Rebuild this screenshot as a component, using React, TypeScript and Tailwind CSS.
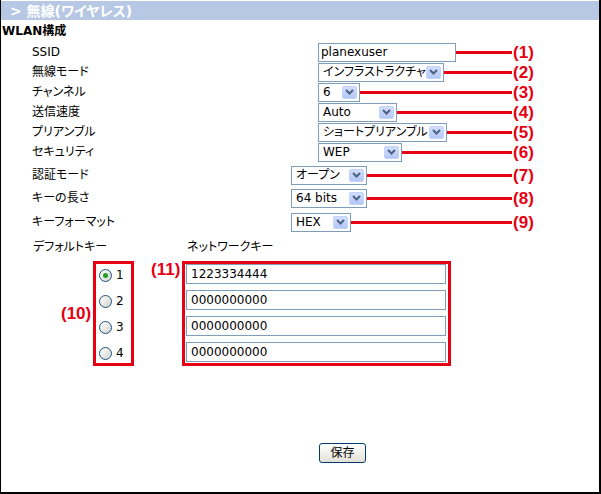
import React from 'react';

const RED = 'bg-[#e60012]';

const Arrow = () => (
  <div className="absolute right-[2px] top-[2px] bottom-[2px] w-[15px] rounded-[2px] border border-[#c3d3fd] bg-gradient-to-b from-[#d2defd] to-[#b4c8f6] flex items-center justify-center">
    <svg width="9" height="6" viewBox="0 0 9 6">
      <path d="M1 1 L4.5 4.5 L8 1" fill="none" stroke="#4d6185" strokeWidth="2" />
    </svg>
  </div>
);

const Select = ({ w, value }: { w: string; value: string }) => (
  <div className={`relative h-[19px] ${w} border border-[#7f9db9] bg-white flex items-center pl-[4px] text-[12px] whitespace-nowrap overflow-hidden`}>
    <span>{value}</span>
    <Arrow />
  </div>
);

const Mark = ({ n }: { n: string }) => (
  <div className="w-[87px] pl-[1px] text-[#e60012] font-['Liberation_Sans',sans-serif] font-bold text-[17px] leading-none">
    ({n})
  </div>
);

const Row = ({
  label,
  labelW,
  n,
  children,
  className = '',
}: {
  label: string;
  labelW: string;
  n: string;
  children: React.ReactNode;
  className?: string;
}) => (
  <div className={`flex items-center h-[20px] ${className}`}>
    <div className={`${labelW} pl-[31px] text-[12px] whitespace-nowrap`}>{label}</div>
    {children}
    <div className={`flex-1 h-[3px] ${RED}`} />
    <Mark n={n} />
  </div>
);

const Radio = ({ checked, label }: { checked?: boolean; label: string }) => (
  <div className="flex items-center h-[20px]">
    <div className="w-[13px] h-[13px] rounded-full border border-[#1c5180] bg-gradient-to-br from-white to-[#d4d4cc] flex items-center justify-center">
      {checked && <div className="w-[5px] h-[5px] rounded-full bg-[#21a121]" />}
    </div>
    <span className="ml-[4px] text-[12px]">{label}</span>
  </div>
);

const KeyInput = ({ value }: { value: string }) => (
  <div className="h-[20px] w-[260px] border border-[#7f9db9] bg-white flex items-center pl-[4px] text-[12px]">
    {value}
  </div>
);

export default function App() {
  return (
    <div className="w-[601px] h-[494px] bg-white border-l border-r-2 border-b-2 border-black pt-px text-black font-['DejaVu_Sans','Noto_Sans_CJK_JP',sans-serif] [font-feature-settings:'palt']">
      <div className="h-[19px] bg-[#b7c8e4] pl-[9px] flex items-center text-white font-bold text-[14px] leading-none">
        &gt; 無線(ワイヤレス)
      </div>
      <div className="h-[22px] flex items-center pl-[1px] font-bold text-[12px]">WLAN構成</div>

      <div className="flex items-center h-[20px]">
        <div className="w-[317px] pl-[31px] text-[12px]">SSID</div>
        <div className="h-[19px] w-[138px] border border-[#7f9db9] bg-white flex items-center pl-[2px] text-[12px]">
          planexuser
        </div>
        <div className={`flex-1 h-[3px] ${RED}`} />
        <Mark n="1" />
      </div>
      <Row label="無線モード" labelW="w-[317px]" n="2">
        <Select w="w-[126px]" value="インフラストラクチャ" />
      </Row>
      <Row label="チャンネル" labelW="w-[317px]" n="3">
        <Select w="w-[42px]" value="6" />
      </Row>
      <Row label="送信速度" labelW="w-[317px]" n="4">
        <Select w="w-[79px]" value="Auto" />
      </Row>
      <Row label="プリアンブル" labelW="w-[317px]" n="5">
        <Select w="w-[129px]" value="ショートプリアンブル" />
      </Row>
      <Row label="セキュリティ" labelW="w-[317px]" n="6">
        <Select w="w-[84px]" value="WEP" />
      </Row>
      <Row label="認証モード" labelW="w-[290px]" n="7" className="mt-[3px]">
        <Select w="w-[76px]" value="オープン" />
      </Row>
      <Row label="キーの長さ" labelW="w-[290px]" n="8" className="mt-[3px]">
        <Select w="w-[76px]" value="64 bits" />
      </Row>
      <Row label="キーフォーマット" labelW="w-[290px]" n="9" className="mt-[4px]">
        <Select w="w-[60px]" value="HEX" />
      </Row>

      <div className="mt-[8px] h-[14px] flex items-center text-[12px]">
        <div className="w-[186px] pl-[32px]">デフォルトキー</div>
        <div>ネットワークキー</div>
      </div>

      <div className="mt-[7px] flex">
        <div className="w-[59px]" />
        <div className="w-[33px] pl-[1px] self-center text-[#e60012] font-['Liberation_Sans',sans-serif] font-bold text-[17px] leading-none">
          (10)
        </div>
        <div className="w-[41px] h-[105px] border-[3px] border-[#e60012] pl-[3px] pt-[1px] flex flex-col gap-[6px]">
          <Radio checked label="1" />
          <Radio label="2" />
          <Radio label="3" />
          <Radio label="4" />
        </div>
        <div className="ml-[16px] w-[32px] pl-[1px] self-start text-[#e60012] font-['Liberation_Sans',sans-serif] font-bold text-[17px] leading-none">
          (11)
        </div>
        <div className="w-[269px] h-[105px] border-[3px] border-[#e60012] pl-[1px] flex flex-col gap-[6px]">
          <KeyInput value="1223334444" />
          <KeyInput value="0000000000" />
          <KeyInput value="0000000000" />
          <KeyInput value="0000000000" />
        </div>
      </div>

      <div className="mt-[77px] ml-[318px] w-[47px] h-[20px] rounded-[3px] border border-[#003c74] bg-gradient-to-b from-white to-[#e3e1d6] flex items-center justify-center text-[12px]">
        保存
      </div>
    </div>
  );
}
